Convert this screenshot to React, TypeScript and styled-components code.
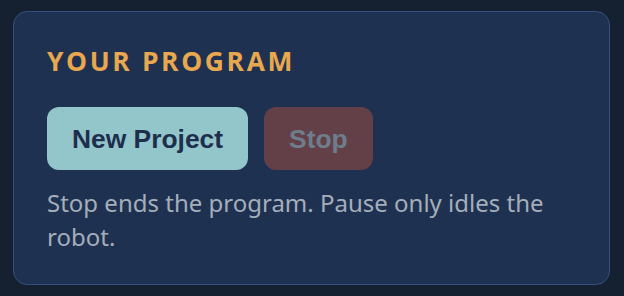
import React from "react";
import styled, { createGlobalStyle } from "styled-components";

const Global = createGlobalStyle`
  html, body { margin: 0; padding: 0; background: #152031; }
  * { box-sizing: border-box; }
`;

const Page = styled.div`
  width: 624px;
  height: 296px;
  padding: 11px 14px 11px 13px;
  background: #152031;
`;

const Card = styled.section`
  height: 274px;
  background: #1f3150;
  border: 1px solid #34507a;
  border-radius: 14px;
  padding: 31px 32px 32px 33px;
  display: flex;
  flex-direction: column;
`;

const Title = styled.h2`
  margin: 0;
  font-family: "Open Sans", "Noto Sans", sans-serif;
  font-weight: 700;
  font-size: 26.4px;
  line-height: 36px;
  letter-spacing: 0.1em;
  color: #e9a74e;
`;

const Actions = styled.div`
  display: flex;
  gap: 16px;
  margin-top: 28px;
`;

const Button = styled.button<{ $variant: "primary" | "danger" }>`
  font-family: "Liberation Sans", Arial, sans-serif;
  font-weight: 700;
  font-size: 26.4px;
  line-height: 30px;
  height: 63px;
  padding: 0 25px;
  border: none;
  border-radius: 12px;
  background: ${(p) => (p.$variant === "primary" ? "#93c6ca" : "#633f48")};
  color: ${(p) => (p.$variant === "primary" ? "#1e2f4e" : "#6d7d8c")};
  cursor: ${(p) => (p.$variant === "primary" ? "pointer" : "default")};
`;

const Note = styled.p`
  margin: 16px 0 0;
  font-family: "Noto Sans", "Open Sans", sans-serif;
  font-size: 24px;
  line-height: 33.6px;
  color: #a4aebb;
`;

export default function App() {
  return (
    <>
      <Global />
      <Page>
        <Card>
          <Title>YOUR PROGRAM</Title>
          <Actions>
            <Button $variant="primary">New Project</Button>
            <Button $variant="danger" disabled>
              Stop
            </Button>
          </Actions>
          <Note>Stop ends the program. Pause only idles the robot.</Note>
        </Card>
      </Page>
    </>
  );
}
